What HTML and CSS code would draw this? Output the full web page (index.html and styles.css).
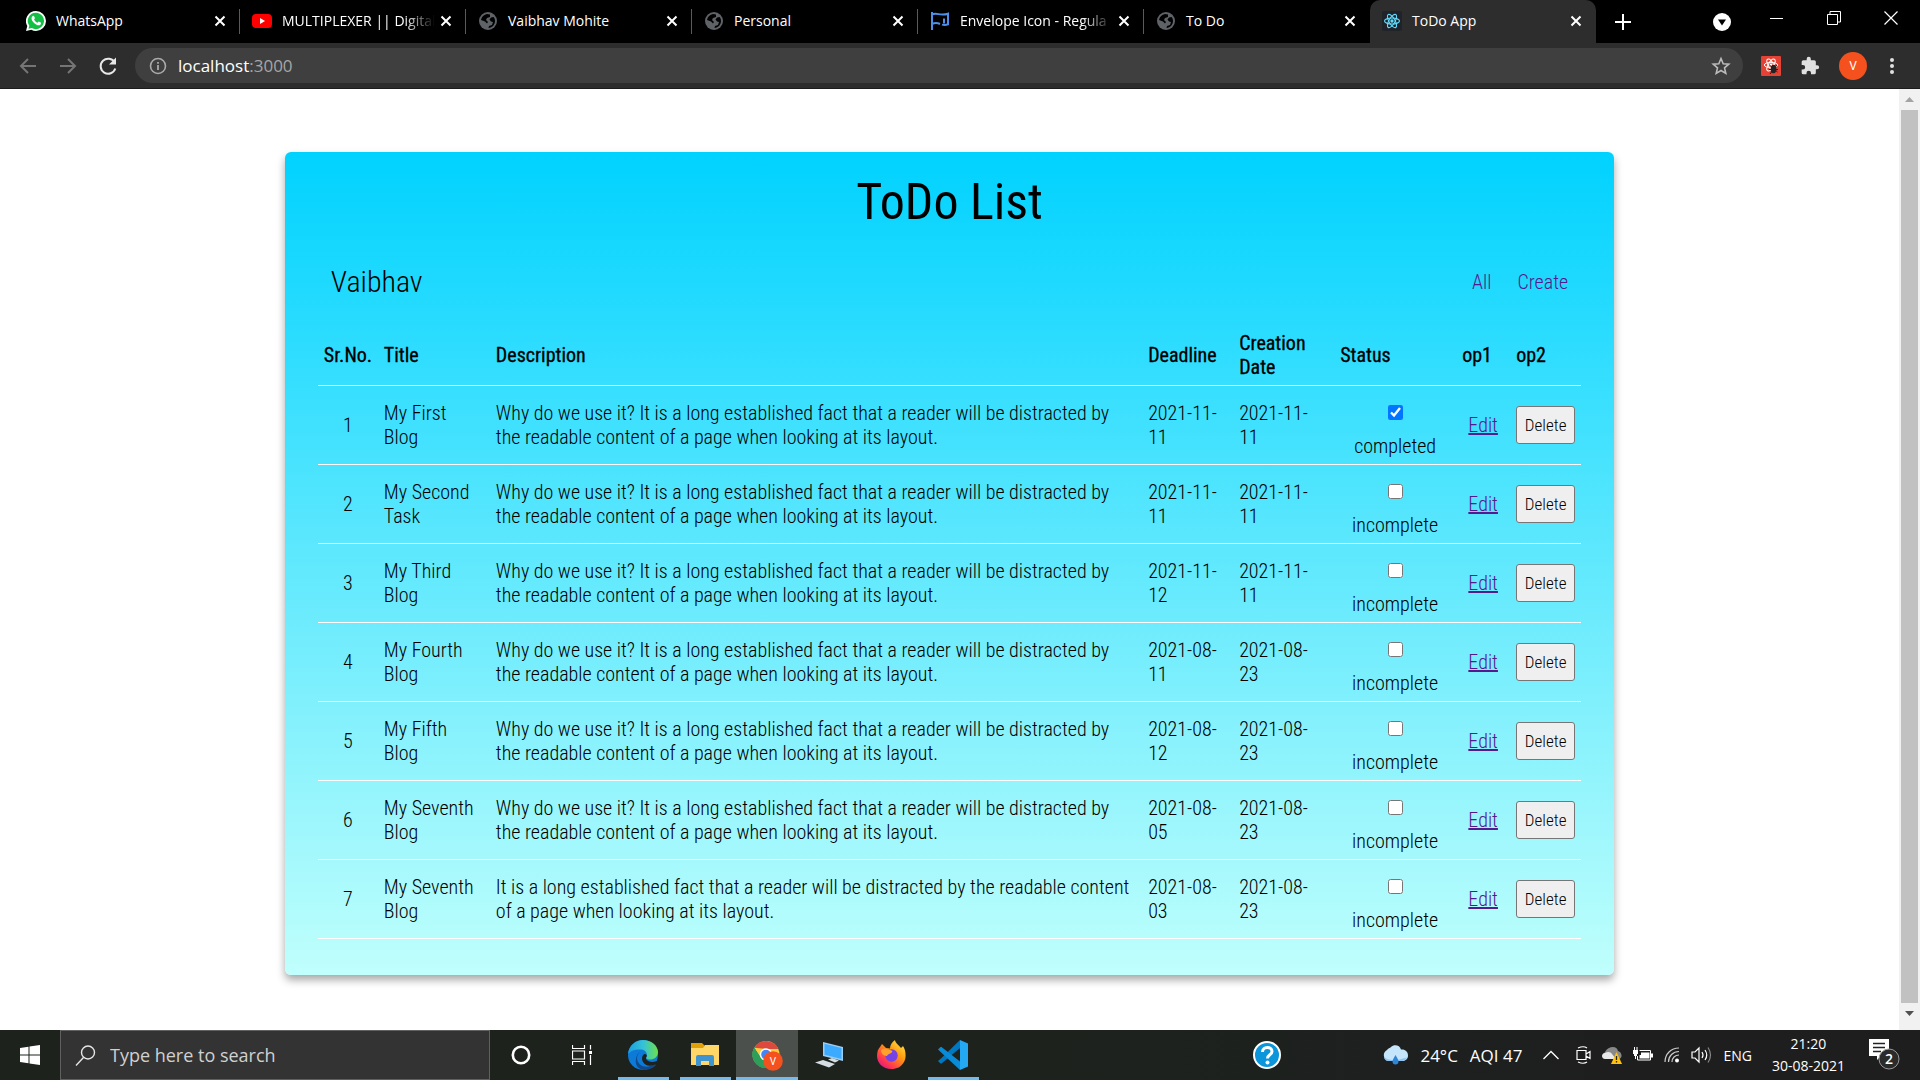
FILE: index.html
```html
<!DOCTYPE html>
<html lang="en">
<head>
<meta charset="utf-8">
<title>ToDo App</title>
<link rel="stylesheet" href="styles.css">
</head>
<body>
<svg class="defs" aria-hidden="true">
  <symbol id="x" viewBox="0 0 12 12"><path d="M1.5 1.5l9 9M10.5 1.5l-9 9" stroke="#fff" stroke-width="2" fill="none"/></symbol>
  <symbol id="globe" viewBox="0 0 18 18"><circle cx="9" cy="9" r="9" fill="#5f6368"/><path d="M8 2c-3 .5-5.500 3-6 6l4 1.500 2 2 1-1.500-2-2 1-2 3-1V2.500zM12 5.500l-1.500 2 1.500 2 2 .5-1 3-3 1-.5 2c4-.5 6.500-3.500 6.500-7 0-1.500-.5-3-1.500-4z" fill="#000"/></symbol>
  <symbol id="react" viewBox="0 0 24 24"><g fill="none" stroke="currentColor" stroke-width="1.500"><ellipse cx="12" cy="12" rx="10" ry="4"/><ellipse cx="12" cy="12" rx="10" ry="4" transform="rotate(60 12 12)"/><ellipse cx="12" cy="12" rx="10" ry="4" transform="rotate(120 12 12)"/></g><circle cx="12" cy="12" r="2.200" fill="currentColor"/></symbol>
</svg>

<header class="browser">
  <div class="tabs">
    <div class="tab">
      <svg class="fav" viewBox="0 0 20 20"><path d="M10 0a10 10 0 0 1 0 20 10 10 0 0 1-4.700-1.200L0 20l1.300-5A10 10 0 0 1 10 0z" fill="#fff"/><path d="M10 1.700a8.200 8.200 0 1 1-4.300 15.300L2.500 17.700l.8-3A8.200 8.200 0 0 1 10 1.700z" fill="#12c143"/><path d="M6.500 5.200c.7-.6 1.300-.5 1.600.1l.8 1.700c.1.500-.8 1.200-.8 1.500.7 1.500 1.900 2.600 3.400 3.200.4 0 .9-1.100 1.300-1.100l2 1c.5.400.2 1.800-.6 2.300-1.500 1-3.800.2-5.900-1.600-2-1.700-3.500-4.500-2.500-6.300z" fill="#fff"/></svg>
      <span class="tab-title">WhatsApp</span>
      <button class="close" aria-label="Close tab"><svg width="12" height="12"><use href="#x"/></svg></button>
    </div>
    <div class="tab">
      <svg class="fav" viewBox="0 0 20 20"><rect y="3" width="20" height="14" rx="4" fill="#f00"/><path d="M8 7l5 3-5 3z" fill="#fff"/></svg>
      <span class="tab-title faded">MULTIPLEXER || Digital</span>
      <button class="close" aria-label="Close tab"><svg width="12" height="12"><use href="#x"/></svg></button>
    </div>
    <div class="tab">
      <svg class="fav" viewBox="-1 -1 20 20"><use href="#globe" width="18" height="18"/></svg>
      <span class="tab-title">Vaibhav Mohite</span>
      <button class="close" aria-label="Close tab"><svg width="12" height="12"><use href="#x"/></svg></button>
    </div>
    <div class="tab">
      <svg class="fav" viewBox="-1 -1 20 20"><use href="#globe" width="18" height="18"/></svg>
      <span class="tab-title">Personal</span>
      <button class="close" aria-label="Close tab"><svg width="12" height="12"><use href="#x"/></svg></button>
    </div>
    <div class="tab">
      <svg class="fav" viewBox="0 0 20 20"><path d="M2 1v18M2 3.500c5-2.500 8 2 16-.8v10.600c-2 .8-4 .8-6 .3M2 13c3-1.500 6-1 8 0M14 7.500v5" fill="none" stroke="#4e8fe8" stroke-width="2"/></svg>
      <span class="tab-title faded">Envelope Icon - Regula</span>
      <button class="close" aria-label="Close tab"><svg width="12" height="12"><use href="#x"/></svg></button>
    </div>
    <div class="tab last">
      <svg class="fav" viewBox="-1 -1 20 20"><use href="#globe" width="18" height="18"/></svg>
      <span class="tab-title">To Do</span>
      <button class="close" aria-label="Close tab"><svg width="12" height="12"><use href="#x"/></svg></button>
    </div>
    <div class="tab active">
      <svg class="fav reacticon" viewBox="0 0 20 20"><rect width="20" height="20" rx="2" fill="#20232a"/><use href="#react" x="1" y="1" width="18" height="18"/></svg>
      <span class="tab-title">ToDo App</span>
      <button class="close" aria-label="Close tab"><svg width="12" height="12"><use href="#x"/></svg></button>
    </div>
    <button class="new-tab" aria-label="New tab"><svg width="16" height="16" viewBox="0 0 16 16"><path d="M8 0v16M0 8h16" stroke="#fff" stroke-width="2"/></svg></button>
    <div class="window-buttons">
      <button class="tab-search" aria-label="Search tabs"><svg width="18" height="18" viewBox="0 0 18 18"><circle cx="9" cy="9" r="9" fill="#fff"/><path d="M5 6.500h8L9 12.500z" fill="#000"/></svg></button>
      <button aria-label="Minimize"><svg width="14" height="14" viewBox="0 0 14 14"><path d="M0 7.500h13" stroke="#fff"/></svg></button>
      <button aria-label="Restore"><svg width="14" height="14" viewBox="0 0 14 14"><path d="M.5 3.500h10v10H.5zM3 3V.5h10.500v10.500H11" fill="none" stroke="#fff"/></svg></button>
      <button aria-label="Close"><svg width="14" height="14" viewBox="0 0 14 14"><path d="M.5.5l13 13M13.500.5l-13 13" stroke="#fff" stroke-width="1.200"/></svg></button>
    </div>
  </div>
  <div class="toolbar">
    <div class="nav-buttons">
      <button aria-label="Back"><svg width="20" height="20" viewBox="0 0 20 20"><path d="M18 10H3M10 3l-7 7 7 7" fill="none" stroke="#757575" stroke-width="2"/></svg></button>
      <button aria-label="Forward"><svg width="20" height="20" viewBox="0 0 20 20"><path d="M2 10h15M10 3l7 7-7 7" fill="none" stroke="#757575" stroke-width="2"/></svg></button>
      <button aria-label="Reload"><svg width="20" height="20" viewBox="0 0 20 20"><path d="M16.700 6.500a7.500 7.500 0 1 0 .6 6" fill="none" stroke="#e8e8e8" stroke-width="2"/><path d="M18 1.500v7h-7z" fill="#e8e8e8"/></svg></button>
    </div>
    <div class="omnibox">
      <svg width="18" height="18" viewBox="0 0 18 18"><circle cx="9" cy="9" r="7.500" fill="none" stroke="#aaa" stroke-width="1.600"/><path d="M9 8v5M9 5v1.800" stroke="#aaa" stroke-width="1.800"/></svg>
      <span class="url">localhost<span class="port">:3000</span></span>
      <button class="star" aria-label="Bookmark"><svg width="20" height="20" viewBox="0 0 20 20"><path d="M10 2.500l2.200 5.200 5.600.5-4.300 3.700 1.300 5.500-4.800-2.900-4.800 2.900 1.300-5.500L2.200 8.200l5.600-.5z" fill="none" stroke="#bbb" stroke-width="1.600"/></svg></button>
    </div>
    <div class="extensions">
      <button aria-label="React Developer Tools"><svg width="20" height="20" viewBox="0 0 20 20"><rect width="20" height="20" rx="1" fill="#e34234"/><use href="#react" x="1" y="1" width="18" height="16" color="#fff"/><ellipse cx="12.500" cy="13" rx="2.800" ry="4.200" fill="#222"/><path d="M8.500 9l8 7M8 13.500h9M9 18l7-9" stroke="#222"/></svg></button>
      <button aria-label="Extensions"><svg width="20" height="20" viewBox="0 0 24 24"><path d="M20.500 11H19V7a2 2 0 0 0-2-2h-4V3.500a2.500 2.500 0 0 0-5 0V5H4a2 2 0 0 0-2 2v3.800h1.500a2.700 2.700 0 0 1 0 5.400H2V20a2 2 0 0 0 2 2h3.800v-1.500a2.700 2.700 0 0 1 5.400 0V22H17a2 2 0 0 0 2-2v-4h1.500a2.500 2.500 0 0 0 0-5z" fill="#e0e0e0"/></svg></button>
      <button class="avatar" aria-label="Profile">V</button>
      <button class="dots" aria-label="Menu"><svg width="4" height="18" viewBox="0 0 4 18"><g fill="#e0e0e0"><circle cx="2" cy="3" r="2"/><circle cx="2" cy="9" r="2"/><circle cx="2" cy="15" r="2"/></g></svg></button>
    </div>
  </div>
</header>

<div class="viewport">
  <main class="page">
    <section class="card">
      <h1>ToDo List</h1>
      <div class="bar">
        <span class="user">Vaibhav</span>
        <nav><a href="#all">All</a><a href="#create">Create</a></nav>
      </div>
      <table>
        <colgroup><col class="c-no"><col class="c-title"><col><col class="c-deadline"><col class="c-created"><col class="c-status"><col class="c-edit"><col class="c-delete"></colgroup>
        <thead>
          <tr><th>Sr.No.</th><th>Title</th><th>Description</th><th>Deadline</th><th class="created">Creation Date</th><th>Status</th><th>op1</th><th>op2</th></tr>
        </thead>
        <tbody>
          <tr><td class="mid">1</td><td>My First Blog</td><td>Why do we use it? It is a long established fact that a reader will be distracted by the readable content of a page when looking at its layout.</td><td>2021-11-11</td><td class="created">2021-11-11</td><td><label><input type="checkbox" checked>completed</label></td><td class="mid"><a href="#edit-1">Edit</a></td><td><button class="delete">Delete</button></td></tr>
          <tr><td class="mid">2</td><td>My Second Task</td><td>Why do we use it? It is a long established fact that a reader will be distracted by the readable content of a page when looking at its layout.</td><td>2021-11-11</td><td class="created">2021-11-11</td><td><label><input type="checkbox">incomplete</label></td><td class="mid"><a href="#edit-2">Edit</a></td><td><button class="delete">Delete</button></td></tr>
          <tr><td class="mid">3</td><td>My Third Blog</td><td>Why do we use it? It is a long established fact that a reader will be distracted by the readable content of a page when looking at its layout.</td><td>2021-11-12</td><td class="created">2021-11-11</td><td><label><input type="checkbox">incomplete</label></td><td class="mid"><a href="#edit-3">Edit</a></td><td><button class="delete">Delete</button></td></tr>
          <tr><td class="mid">4</td><td>My Fourth Blog</td><td>Why do we use it? It is a long established fact that a reader will be distracted by the readable content of a page when looking at its layout.</td><td>2021-08-11</td><td class="created">2021-08-23</td><td><label><input type="checkbox">incomplete</label></td><td class="mid"><a href="#edit-4">Edit</a></td><td><button class="delete">Delete</button></td></tr>
          <tr><td class="mid">5</td><td>My Fifth Blog</td><td>Why do we use it? It is a long established fact that a reader will be distracted by the readable content of a page when looking at its layout.</td><td>2021-08-12</td><td class="created">2021-08-23</td><td><label><input type="checkbox">incomplete</label></td><td class="mid"><a href="#edit-5">Edit</a></td><td><button class="delete">Delete</button></td></tr>
          <tr><td class="mid">6</td><td>My Seventh Blog</td><td>Why do we use it? It is a long established fact that a reader will be distracted by the readable content of a page when looking at its layout.</td><td>2021-08-05</td><td class="created">2021-08-23</td><td><label><input type="checkbox">incomplete</label></td><td class="mid"><a href="#edit-6">Edit</a></td><td><button class="delete">Delete</button></td></tr>
          <tr><td class="mid">7</td><td>My Seventh Blog</td><td>It is a long established fact that a reader will be distracted by the readable content of a page when looking at its layout.</td><td>2021-08-03</td><td class="created">2021-08-23</td><td><label><input type="checkbox">incomplete</label></td><td class="mid"><a href="#edit-7">Edit</a></td><td><button class="delete">Delete</button></td></tr>
        </tbody>
      </table>
    </section>
  </main>
  <div class="scrollbar">
    <svg width="21" height="21" viewBox="0 0 21 21"><path d="M6 13l4.500-5 4.500 5z" fill="#a3a3a3"/></svg>
    <div class="thumb"></div>
    <svg width="21" height="21" viewBox="0 0 21 21"><path d="M6 8l4.500 5L15 8z" fill="#505050"/></svg>
  </div>
</div>

<footer class="taskbar">
  <button class="start" aria-label="Start"><svg width="20" height="20" viewBox="0 0 20 20"><path d="M0 3l8.500-1.200v7.700H0zM9.500 1.600L20 0v9.500H9.500zM0 10.500h8.500v7.700L0 17zM9.500 10.500H20V20l-10.500-1.600z" fill="#fff"/></svg></button>
  <label class="search">
    <svg width="21" height="21" viewBox="0 0 21 21"><circle cx="13" cy="7.500" r="6.500" fill="none" stroke="#e6e6e6" stroke-width="1.400"/><path d="M8.500 12.500L1 20.500" stroke="#e6e6e6" stroke-width="1.400"/></svg>
    <input type="text" placeholder="Type here to search" aria-label="Search">
  </label>
  <button class="app small" aria-label="Cortana"><svg width="20" height="20" viewBox="0 0 20 20"><circle cx="10" cy="10" r="8.200" fill="none" stroke="#fff" stroke-width="2.600"/></svg></button>
  <button class="app small" aria-label="Task view"><svg width="20" height="20" viewBox="0 0 20 20"><path d="M.5 0v3.500h12V0M.5 6h12v8H.5zM.5 20v-3.500h12V20M18.500 0v4.500M18.500 10v10" fill="none" stroke="#fff" stroke-width="1.200"/><path d="M17 6h3v3h-3z" fill="#fff"/></svg></button>
  <button class="app open" aria-label="Edge"><svg width="30" height="30" viewBox="0 0 30 30"><defs><linearGradient id="e1" x1="0" x2="1"><stop stop-color="#1a9fe0"/><stop offset=".5" stop-color="#35c1d8"/><stop offset="1" stop-color="#6be04b"/></linearGradient></defs><circle cx="15" cy="15" r="15" fill="#0c7ad6"/><path d="M0 14C1 5 8 0 15 0c8 0 15 5.500 15 12 0 5-4 7.500-8 7.500-3 0-4.500-1.500-4-2.500 2-2.500.5-7-5-7.500C8 9 3 10 0 14z" fill="url(#e1)"/><path d="M12 12c-4 3-4 9 0 12.500 4 3.500 10 2.500 15-.5 1 .1 1 1 .3 1.800C24 29 20 30 16 30 9 29 7 24 8 19c.5-3.500 2-6 4-7z" fill="#114a8b"/><path d="M18.500 17c-1.500 1.500 0 4.500 6 5 2 0 4-1 5-1.500l.5-3 0 6-3 1c-5 2.500-10 1-12-2.500-2-4-.500-7 1.500-8 2 0 3 1.500 2 3z" fill="#1d221e"/></svg></button>
  <button class="app open" aria-label="File Explorer"><svg width="28" height="24" viewBox="0 0 28 24"><path d="M0 0h11l2.500 2.500V6H0z" fill="#e0a008"/><path d="M0 5h12l2-3h14v20H0z" fill="#ffd768"/><path d="M5 23V14q0-2 2-2h14q2 0 2 2v9h-5v-5h-8v5z" fill="#3f93cf"/></svg></button>
  <button class="app current" aria-label="Chrome"><svg width="31" height="31" viewBox="0 0 31 31"><circle cx="14" cy="14.500" r="13.500" fill="#ffcd40"/><path d="M2.300 7.700a13.500 13.500 0 0 1 24 1.300H14z" fill="#db4a3c"/><path d="M2.300 7.700A13.500 13.500 0 0 0 14 28l4-9-9-1z" fill="#109d58"/><path d="M2.300 7.700l7 11 3 4L14 28A13.500 13.500 0 0 1 2.300 7.700z" fill="#2e9e5b"/><circle cx="14" cy="14.500" r="6.200" fill="#fff"/><circle cx="14" cy="14.500" r="4.800" fill="#4285f4"/><circle cx="21" cy="21" r="9.800" fill="#f4511e"/><text x="21" y="25" text-anchor="middle" font-size="10" fill="#fff" font-family="Roboto, sans-serif">V</text></svg></button>
  <button class="app" aria-label="Remote desktop"><svg width="28" height="26" viewBox="0 0 28 26"><path d="M8 0l20 5v14L8 14z" fill="#9ccdf2"/><path d="M9.500 1.800L26.500 6v11L9.500 12.800z" fill="#3cabff"/><path d="M13 17.500l4-1.500 7 2.500-4 2zM0 20.500L8 18l12 4-6 3.500z" fill="#d4dce4"/></svg></button>
  <button class="app" aria-label="Firefox"><svg width="29" height="30" viewBox="0 0 29 30"><defs><linearGradient id="f1" x1="1" y1="0" x2=".2" y2="1"><stop stop-color="#fff44f"/><stop offset=".45" stop-color="#ff980e"/><stop offset=".8" stop-color="#ff3750"/><stop offset="1" stop-color="#e31587"/></linearGradient></defs><path d="M5 4l4 4 4 .5C13 5 15 2 18 0c0 3 4 5 6 8l2-2c3 4 3.500 12 1 16C24 27 20 29 14.500 29 6 29 0 23 0 16 0 12 1 9 3 7z" fill="url(#f1)"/><circle cx="14.500" cy="15.500" r="6.200" fill="#7542e5"/><path d="M4 10c4-2 6-1 7 0 3 0 5 .5 4 2-1 2-4 1.500-5 4-4 0-6-3-6-6z" fill="#ffa22a"/></svg></button>
  <button class="app open" aria-label="Visual Studio Code"><svg width="30" height="30" viewBox="0 0 30 30"><path d="M22 0L3 18.500l-3 2.500 2.500 2.500h1L22 8z" fill="#0078c0"/><path d="M22 30L0 9.500 2.500 7h1L22 21.500z" fill="#0a8bd8"/><path d="M22 0l8 3.500v23L22 30z" fill="#25a8f2"/></svg></button>

  <div class="tray">
    <button class="help" aria-label="Help"><svg width="28" height="28" viewBox="0 0 28 28"><circle cx="14" cy="14" r="13" fill="#0b95da" stroke="#fff" stroke-width="2"/><path d="M9.500 11c0-6 9.500-6 9.500-.5 0 3.500-4.500 3-4.500 7" fill="none" stroke="#fff" stroke-width="3"/><circle cx="14.500" cy="21.500" r="2" fill="#fff"/></svg></button>
    <span class="weather"><svg width="26" height="20" viewBox="0 0 26 20"><path d="M6 16a6 6 0 0 1-1-11C6 3 8 3.500 9 2c3-3 9-2 10 2.500 4-.5 7 2 7 6s-3 5.500-6 5.500z" fill="#c5e5fb"/><path d="M2 12c4 4 12 4 23 .5-1 2.500-3 3.500-5 3.500H6c-2 0-4-2-4-4z" fill="#8cc4f3"/><path d="M13.500 10c2 3.500 3 5 3 6.500a3 3 0 0 1-6 0c0-1.500 1-3 3-6.500z" fill="#2f86d6"/></svg><span>24°C</span><span>AQI 47</span></span>
    <svg class="more" width="16" height="10" viewBox="0 0 16 10"><path d="M.5 9L8 1.500 15.500 9" fill="none" stroke="#fff" stroke-width="1.300"/></svg>
    <svg width="15" height="18" viewBox="0 0 15 18"><path d="M1 4.500h9v9H1zM10 8l4-2.500v7L10 10M2 2q5.500-2.500 9 0M2 16q5.500 2.500 9 0" fill="none" stroke="#fff" stroke-width="1.200"/></svg>
    <svg width="20" height="18" viewBox="0 0 20 18"><path d="M4 13a4 4 0 0 1-1-7C6 0 15-1 16 5c4 1 5 7 1 8z" fill="#888"/><path d="M3 13c-4 0-4-6 0-6 3-2 6-1 7 1l4 5z" fill="#e8e8e8"/><path d="M14.500 6l5.500 12H9z" fill="#ffc20e"/><path d="M14.500 10v4M14.500 15v1.500" stroke="#222" stroke-width="1.300"/></svg>
    <svg width="20" height="16" viewBox="0 0 20 16"><path d="M6.500 3.500h11v9.500h-13v-4" fill="none" stroke="#fff"/><path d="M8 5.500h8.500v6H6.500V8H8zM18 6.500h2v4h-2zM0 3h5v4H4v2H1V7H0zM1 0h1v3H1zM3.500 0h1v3h-1zM2 9h1v3H2z" fill="#fff"/></svg>
    <svg width="16" height="16" viewBox="0 0 16 16"><path d="M1 15C1 7 7 1 15 1M4.500 15c0-6 4.500-10.500 10.500-10.500M8 15c0-4 3-7 7-7" fill="none" stroke="#ccc" stroke-width="1.200"/><circle cx="13" cy="13.500" r="2" fill="#fff"/></svg>
    <svg width="21" height="18" viewBox="0 0 21 18"><path d="M1 6h3l4-4v14l-4-4H1z" fill="none" stroke="#fff" stroke-width="1.200"/><path d="M11 6q2 3 0 6M14 4q3.500 5 0 10" fill="none" stroke="#fff" stroke-width="1.200"/><path d="M17 1.500q5 7.500 0 15" fill="none" stroke="#888" stroke-width="1.200"/></svg>
    <span class="lang">ENG</span>
    <span class="clock"><span>21:20</span><span>30-08-2021</span></span>
    <button class="notify" aria-label="Notifications"><svg width="32" height="32" viewBox="0 0 32 32"><path d="M0 0h20v17H12l-4 4v-4H0z" fill="#fff"/><path d="M4 4.500h12M4 8.500h12M4 12.500h8" stroke="#222" stroke-width="1.500"/><circle cx="20" cy="20" r="10" fill="#2b2b2b" stroke="#999"/><text x="20" y="25" text-anchor="middle" font-size="14" fill="#fff" font-weight="600" font-family="Open Sans, sans-serif">2</text></svg></button>
  </div>
</footer>
</body>
</html>
```
FILE: styles.css
```css
* { box-sizing: border-box; }

body {
  margin: 0;
  height: 100vh;
  display: flex;
  flex-direction: column;
  overflow: hidden;
  background: #fff;
  font-family: "Open Sans", "Noto Sans", sans-serif;
}

button {
  display: flex;
  align-items: center;
  justify-content: center;
  margin: 0;
  padding: 0;
  border: 0;
  background: none;
  font: inherit;
}

svg { display: block; flex: none; }
.defs { display: none; }

/* Tab strip */
.tabs {
  display: flex;
  height: 43px;
  padding-left: 14px;
  background: #000;
}
.tab {
  position: relative;
  display: flex;
  align-items: center;
  flex: 0 1 226px;
  min-width: 0;
  padding: 0 14px 2px 12px;
  color: #fff;
  font-size: 14px;
}
.tab::after {
  content: "";
  position: absolute;
  right: 0;
  top: 9px;
  width: 1px;
  height: 25px;
  background: #5a5a5a;
}
.tab.last::after, .tab.active::after { display: none; }
.tab.active { background: #2d2d2d; border-radius: 10px 10px 0 0; }
.fav { width: 20px; height: 20px; margin-right: 10px; }
.reacticon { color: #61dafb; }
.tab-title {
  flex: 1;
  margin-right: 2px;
  white-space: nowrap;
}
.faded { mask-image: linear-gradient(to right, #000 78%, transparent 98%); }
.new-tab { width: 54px; }
.window-buttons { display: flex; margin-left: auto; padding-right: 1px; }
.window-buttons button { width: 57px; height: 36px; }
.window-buttons .tab-search { height: 43px; width: 52px; }

/* Address bar */
.toolbar {
  display: flex;
  align-items: center;
  height: 46px;
  padding: 0 22px 0 14px;
  background: #2d2d2d;
  border-bottom: 1px solid #1c1c1c;
}
.nav-buttons { display: flex; gap: 20px; padding: 0 17px 0 4px; }
.omnibox {
  flex: 1;
  display: flex;
  align-items: center;
  height: 35px;
  padding: 0 12px 0 14px;
  border-radius: 18px;
  background: #3f3f3f;
}
.url { margin-left: 11px; color: #fff; font-size: 17px; line-height: 24px; }
.port { color: #a6a6a6; }
.star { margin-left: auto; }
.extensions { display: flex; align-items: center; gap: 19px; margin-left: 18px; }
.avatar {
  width: 28px;
  height: 28px;
  border-radius: 50%;
  background: #f4511e;
  color: #fff;
  font: 12px Roboto, sans-serif;
}
.dots { width: 12px; }

/* Page */
.viewport { flex: 1; min-height: 0; display: flex; }
.page {
  flex: 1;
  min-width: 0;
  padding-top: 63px;
  font-family: "Roboto Condensed", Roboto, sans-serif;
  font-weight: 300;
  font-size: 20px;
  line-height: 24px;
  color: #000;
}
.card {
  width: 70%;
  margin: 0 auto;
  padding: 20px 33px 36px;
  border-radius: 6px;
  background: linear-gradient(#00d2ff, #c0fffc);
  box-shadow: 0 5px 8px rgba(0, 0, 0, .35);
}
h1 { margin: 0; font-size: 50px; font-weight: 400; line-height: 60px; text-align: center; }
.bar {
  display: flex;
  align-items: center;
  justify-content: space-between;
  margin: 32px 0 25px;
  padding: 0 13px;
}
.user { font-size: 30px; line-height: 36px; }
nav { display: flex; gap: 26px; }
a { color: #551a8b; }
nav a { text-decoration: none; }

table { width: 100%; table-layout: fixed; border-spacing: 0; }
.c-no { width: 60px; }
.c-title { width: 112px; }
.c-deadline { width: 91px; }
.c-created { width: 101px; }
.c-status { width: 122px; }
.c-edit { width: 54px; }
.c-delete { width: 71px; }
th, td {
  padding: 6px;
  border-bottom: 1px solid #fff;
  text-align: left;
  vertical-align: middle;
}
th { font-weight: 400; -webkit-text-stroke: 0.3px #000; }
.mid { text-align: center; }
.created { padding-right: 20px; }
label { display: flex; }
td label {
  flex-direction: column;
  align-items: center;
  gap: 14px;
  padding-top: 13px;
}
td input { width: 15px; height: 15px; margin: 0; accent-color: #0075ff; }
.delete {
  width: 59px;
  height: 38px;
  border: 1px solid #767676;
  border-radius: 3px;
  background: #efefef;
  color: #000;
  font-size: 17px;
}

.scrollbar {
  display: flex;
  flex-direction: column;
  width: 21px;
  padding-bottom: 6px;
  background: #f1f1f1;
}
.thumb { flex: 1; margin: 0 2px; background: #c1c1c1; }

/* Taskbar */
.taskbar {
  display: flex;
  height: 50px;
  background: linear-gradient(to right, #1d221c, #1d221e 60%, #1e1e1e 85%);
  color: #fff;
}
.start { width: 60px; }
.search {
  align-items: center;
  gap: 14px;
  width: 430px;
  padding: 0 14px;
  border: 1px solid #606060;
  background: #333;
}
.search input {
  flex: 1;
  min-width: 0;
  padding: 0;
  border: 0;
  outline: 0;
  background: none;
  font: 18px "Open Sans", sans-serif;
}
.search input::placeholder { color: #d0d0d0; opacity: 1; }
.app { width: 62px; border-bottom: 3px solid transparent; border-top: 3px solid transparent; }
.app.small { width: 61px; }
.app.open { background: linear-gradient(#76b9ed, #76b9ed) center bottom / 51px 3px no-repeat border-box; }
.app.current { border-bottom-color: #76b9ed; border-top-color: #4b504c; background: #4b504c; }
.tray { display: flex; align-items: center; gap: 11px; margin-left: auto; padding-right: 19px; }
.help { margin-right: 90px; }
.weather { display: flex; align-items: center; gap: 12px; margin-right: 10px; font-size: 17px; }
.more { margin-right: 6px; }
.lang { margin-right: 9px; font-size: 14px; }
.clock { display: flex; flex-direction: column; align-items: center; font-size: 14px; line-height: 22px; }
.notify { margin-left: 13px; }
```
